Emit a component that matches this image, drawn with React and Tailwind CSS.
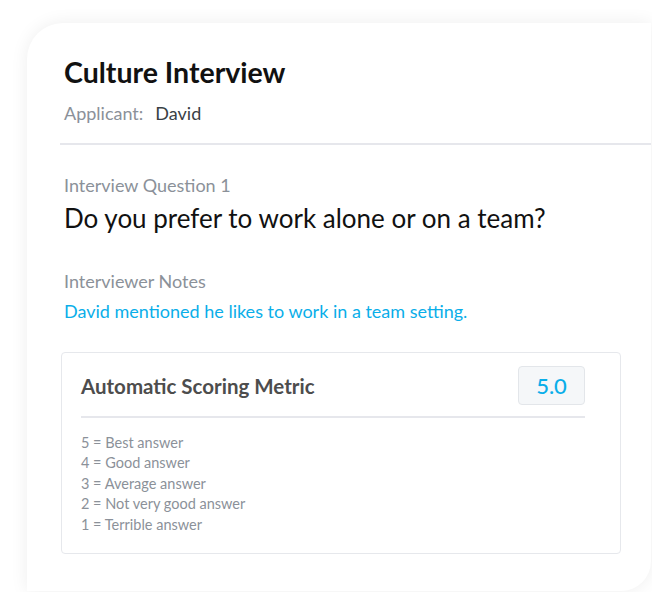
import React from "react";

const scale = [
  "5 = Best answer",
  "4 = Good answer",
  "3 = Average answer",
  "2 = Not very good answer",
  "1 = Terrible answer",
];

export default function App() {
  return (
    <div className="min-h-[592px] w-[652px] overflow-hidden bg-white pt-[23px] pl-[27px] font-['Lato','Noto_Sans',sans-serif]">
      <div className="h-[568px] w-[624px] rounded-tl-[36px] rounded-br-[30px] bg-white shadow-[0_0_18px_rgba(0,0,0,0.07)] pt-[32px]">
        {/* header */}
        <div className="pl-[37px]">
          <h1 className="text-[28.5px] leading-[34px] font-bold text-[#111]">
            Culture Interview
          </h1>
          <div className="mt-[12px] flex items-center text-[18px] leading-[24px]">
            <span className="text-[#8b9199]">Applicant:</span>
            <span className="ml-[12px] text-[#3a3f45]">David</span>
          </div>
        </div>

        <div className="mt-[18px] ml-[33px] h-[2px] bg-[#e6e7ec]" />

        {/* question */}
        <div className="pl-[37px]">
          <p className="mt-[28px] text-[18px] leading-[24px] text-[#8b9199]">
            Interview Question 1
          </p>
          <p className="mt-[5px] text-[26px] leading-[32px] text-[#111]">
            Do you prefer to work alone or on a team?
          </p>

          <p className="mt-[35px] text-[18px] leading-[24px] text-[#8b9199]">
            Interviewer Notes
          </p>
          <p className="mt-[6px] text-[18px] leading-[24px] text-[#0aaee9]">
            David mentioned he likes to work in a team setting.
          </p>

          {/* scoring box */}
          <div className="mt-[29px] -ml-[3px] w-[560px] rounded-[4px] border border-[#e6e8ec] pt-[13px] pl-[19px] pr-[35px] pb-[18px]">
            <div className="flex items-center justify-between">
              <h3 className="text-[20.5px] leading-[28px] font-bold text-[#4d4d4d]">
                Automatic Scoring Metric
              </h3>
              <div className="flex h-[39px] w-[67px] items-center justify-center rounded-[4px] border border-[#e3e6ea] bg-[#f5f7f9] text-[22px] font-medium text-[#0aaee9]">
                5.0
              </div>
            </div>
            <div className="mt-[11px] h-[2px] bg-[#e6e7ec]" />
            <ul className="mt-[15px] text-[14.5px] leading-[20.4px] text-[#8b9199]">
              {scale.map((s) => (
                <li key={s}>{s}</li>
              ))}
            </ul>
          </div>
        </div>
      </div>
    </div>
  );
}
